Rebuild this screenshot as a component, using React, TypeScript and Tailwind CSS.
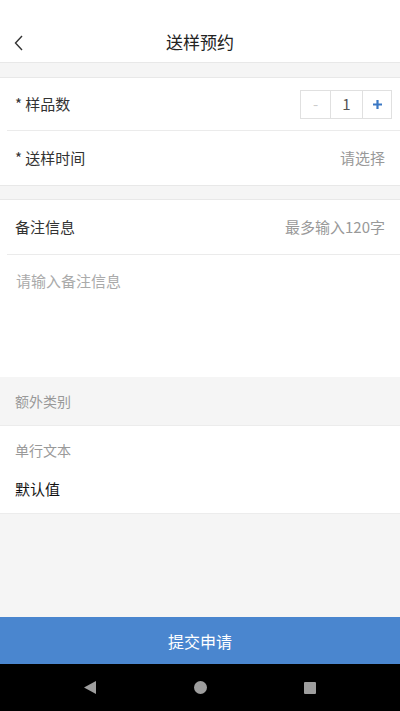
const font = { fontFamily: '"Noto Sans CJK SC", Roboto, sans-serif' };

export default function App() {
  return (
    <div className="flex h-[711px] w-[400px] flex-col bg-[#f5f5f5]" style={font}>
      {/* Header */}
      <div className="h-[21px] bg-white" />
      <div className="relative flex h-[42px] items-center justify-center border-b border-[#e8e8e8] bg-white">
        <svg className="absolute left-[13px] top-[13px]" width="12" height="18" viewBox="0 0 12 18" fill="none">
          <path d="M9 2 L2.5 9 L9 16" stroke="#333" strokeWidth="1.4" />
        </svg>
        <span className="text-[17px] text-[#222]">送样预约</span>
      </div>

      <div className="h-[14px]" />

      {/* Sample count and time */}
      <div className="border-y border-[#e8e8e8] bg-white">
        <div className="ml-[7px] flex h-[53px] items-center justify-between border-b border-[#ebebeb] pr-[8px] pl-[8px]">
          <span className="text-[15px] text-[#333]">* 样品数</span>
          <div className="flex h-[29px] border border-[#e0e0e0] text-[15px]">
            <div className="flex w-[30px] items-center justify-center border-r border-[#e0e0e0] text-[#ccc]">-</div>
            <div className="flex w-[32px] items-center justify-center border-r border-[#e0e0e0] text-[#555]">1</div>
            <div className="flex w-[28px] items-center justify-center">
              <svg width="11" height="11" viewBox="0 0 11 11">
                <path d="M5.5 1 V10 M1 5.5 H10" stroke="#3b78c4" strokeWidth="2.2" />
              </svg>
            </div>
          </div>
        </div>
        <div className="flex h-[54px] items-center justify-between pr-[15px] pl-[15px]">
          <span className="text-[15px] text-[#333]">* 送样时间</span>
          <span className="text-[15px] text-[#999]">请选择</span>
        </div>
      </div>

      <div className="h-[13px]" />

      {/* Remarks */}
      <div className="border-t border-[#e8e8e8] bg-white">
        <div className="ml-[7px] flex h-[55px] items-center justify-between border-b border-[#ebebeb] pr-[15px] pl-[8px]">
          <span className="text-[15px] text-[#333]">备注信息</span>
          <span className="text-[15px] text-[#999]">最多输入120字</span>
        </div>
        <div className="h-[122px] px-[16px] pt-[15px] text-[15px] text-[#aaa]">请输入备注信息</div>
      </div>

      {/* Extra category */}
      <div className="flex h-[49px] items-center border-b border-[#ececec] px-[15px] text-[14px] text-[#999]">额外类别</div>
      <div className="flex h-[88px] flex-col border-b border-[#ececec] bg-white px-[15px]">
        <span className="mt-[14px] text-[14px] text-[#999]">单行文本</span>
        <span className="mt-[17px] text-[15px] text-[#111]">默认值</span>
      </div>

      <div className="flex-1" />

      {/* Submit */}
      <button className="flex h-[47px] items-center justify-center bg-[#4a86cf] text-[16px] text-white">提交申请</button>

      {/* Nav bar */}
      <div className="flex h-[47px] items-center justify-between bg-black pr-[84px] pl-[84px]">
        <svg width="12" height="13" viewBox="0 0 12 13">
          <path d="M0 6.5 L12 0 V13 Z" fill="#9e9e9e" />
        </svg>
        <div className="h-[13px] w-[13px] rounded-full bg-[#9e9e9e]" />
        <div className="h-[12px] w-[12px] rounded-[1px] bg-[#9e9e9e]" />
      </div>
    </div>
  );
}
